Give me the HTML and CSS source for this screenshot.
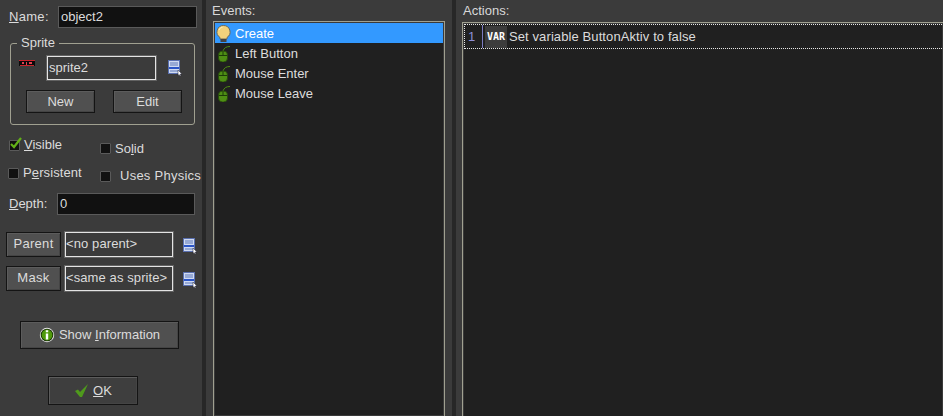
FILE: index.html
```html
<!DOCTYPE html>
<html lang="en">
<head>
<meta charset="utf-8">
<title>Object Properties</title>
<link rel="stylesheet" href="styles.css">
</head>
<body>
<svg class="defs" width="0" height="0" aria-hidden="true">
  <symbol id="menu" viewBox="0 0 14 16">
    <rect x="0.500" y="0.500" width="11" height="13" fill="#cfdaf2" stroke="#5a70b0"/>
    <path d="M2 3h8M2 5h8M2 11h8" stroke="#5f78b8"/>
    <rect x="1" y="7" width="10" height="2" fill="#2a55c8"/>
    <path d="M10 10v5.500l1-1 1 1.500 1-.5-.8-1.500H14z" fill="#fff" stroke="#223" stroke-width=".5"/>
  </symbol>
  <symbol id="mouse" viewBox="0 0 15 17">
    <path d="M7 6c1-3 3-4.500 7-4.500" fill="none" stroke="#4d8a12"/>
    <rect x="2.500" y="6" width="9" height="11" rx="4" fill="#4f8f14" stroke="#24480a" stroke-width=".8"/>
    <path d="M3 10.500h8M7 6v5" stroke="#1d3d08"/>
  </symbol>
</svg>
<div class="window">
  <aside class="props">
    <div class="row name-row">
      <label class="label name-label"><u>N</u>ame:</label>
      <div class="field dark name-field">object2</div>
    </div>
    <fieldset class="group">
      <legend>Sprite</legend>
      <div class="row sprite-row">
        <svg class="thumb" width="16" height="6" viewBox="0 0 16 6"><rect width="16" height="6" fill="#0a0a0a"/><path d="M0 .5h16M1 5.500h14" stroke="#c8242c"/><path d="M3 2h2v2H3zM7 2h1v3H7zM10 2h3v2h-3z" fill="#e04050"/></svg>
        <div class="field light sprite-field">sprite2</div>
        <svg class="menu-icon"><use href="#menu"/></svg>
      </div>
      <div class="row sprite-buttons">
        <button class="btn small">New</button>
        <button class="btn small">Edit</button>
      </div>
    </fieldset>
    <div class="checks">
      <div class="check check-visible">
        <span class="box"><svg class="tick" width="14" height="14" viewBox="0 0 14 14"><path d="M2 7l3 3 7-9" fill="none" stroke="#62b018" stroke-width="2.200"/></svg></span><span class="check-text"><u>V</u>isible</span>
      </div>
      <div class="check check-solid"><span class="box"></span><span class="check-text">So<u>l</u>id</span></div>
      <div class="check check-persistent"><span class="box"></span><span class="check-text">P<u>e</u>rsistent</span></div>
      <div class="check check-physics"><span class="box"></span><span class="check-text wide">Uses Physics</span></div>
    </div>
    <div class="row depth-row">
      <label class="label depth-label"><u>D</u>epth:</label>
      <div class="field dark depth-field">0</div>
    </div>
    <div class="row parent-row">
      <button class="btn side">Parent</button>
      <div class="field light side-field">&lt;no parent&gt;</div>
      <svg class="menu-icon low"><use href="#menu"/></svg>
    </div>
    <div class="row mask-row">
      <button class="btn side">Mask</button>
      <div class="field light side-field">&lt;same as sprite&gt;</div>
      <svg class="menu-icon low"><use href="#menu"/></svg>
    </div>
    <button class="btn info">
      <svg width="16" height="16" viewBox="0 0 16 16"><circle cx="8" cy="8" r="7.200" fill="#e8e8e8"/><circle cx="8" cy="8" r="6.300" fill="#173006"/><circle cx="8" cy="8" r="5.400" fill="#4f9a0c"/><path d="M6.800 3.200h2.400v2H6.800zM6.800 6.500h2.400v6H6.800z" fill="#fff"/></svg>
      <span>Show <u>I</u>nformation</span>
    </button>
    <button class="btn ok">
      <svg width="13" height="13" viewBox="0 0 13 13"><path d="M0 7l3-1.500 2 2.500 8-8-6 13H5z" fill="#4f9a1c"/></svg>
      <span><u>O</u>K</span>
    </button>
  </aside>
  <div class="divider"></div>
  <section class="events">
    <div class="heading">Events:</div>
    <div class="list">
      <div class="event selected">
        <svg class="event-icon" viewBox="0 0 15 17"><path d="M7.500 .5a6.500 6.500 0 0 0-3.500 12V14h7v-1.500a6.500 6.500 0 0 0-3.500-12z" fill="#f2d27c" stroke="#6e6a58"/><path d="M4.500 14h6v3h-6z" fill="#444"/><path d="M3 5c1-2 2-2.800 3.500-2.800" stroke="#fff6d0" fill="none"/></svg>
        <span>Create</span>
      </div>
      <div class="event"><svg class="event-icon"><use href="#mouse"/></svg><span>Left Button</span></div>
      <div class="event"><svg class="event-icon"><use href="#mouse"/></svg><span>Mouse Enter</span></div>
      <div class="event"><svg class="event-icon"><use href="#mouse"/></svg><span>Mouse Leave</span></div>
    </div>
  </section>
  <div class="divider"></div>
  <section class="actions">
    <div class="heading">Actions:</div>
    <div class="list action-list">
      <div class="action">
        <span class="action-num">1</span>
        <span class="var-badge">VAR</span>
        <span class="action-text">Set variable ButtonAktiv to false</span>
      </div>
    </div>
  </section>
</div>
</body>
</html>
```
FILE: styles.css
```css
* { box-sizing: border-box; }
html, body { margin: 0; height: 100%; }
body { background: #3b3b3b; overflow: hidden; color: #dcdcdc; font: 13px/16px "Liberation Sans", Arial, sans-serif; }
.defs { position: absolute; }
.window { display: flex; height: 416px; width: 943px; }
.props { width: 202px; flex: none; display: flex; flex-direction: column; }
.divider { width: 4px; flex: none; background: #272727; }
.row { display: flex; align-items: center; }
.field { display: flex; align-items: center; padding-left: 2px; white-space: nowrap; overflow: hidden; }
.field.dark { background: #111; border: 1px solid #5a5a5a; }
.field.light { background: #3b3b3b; border: 1px solid #e4e4e4; box-shadow: 0 0 0 1px #626262; }
.btn { display: flex; align-items: center; justify-content: center; padding: 0; font: inherit; color: #dcdcdc; background: #505050; border: 1px solid #141414; box-shadow: inset 1px 1px 0 #5c5c5c, inset -1px -1px 0 #444; }
.name-row { margin: 6px 0 0 9px; height: 22px; }
.name-label { width: 49px; letter-spacing: .3px; }
.name-field { width: 139px; height: 22px; }
.group { margin: 7px 0 0 10px; width: 185px; height: 90px; padding: 0; border: 1px solid #a0a090; border-radius: 3px; }
.group legend { margin-left: 6px; padding: 0 4px; line-height: 16px; }
.sprite-row { margin: 4px 0 0 8px; height: 26px; }
.thumb { flex: none; align-self: flex-start; margin-top: 5px; }
.field.sprite-field { width: 109px; height: 24px; margin-left: 12px; padding-left: 1px; }
.menu-icon { width: 14px; height: 16px; flex: none; margin-left: 12px; }
.menu-icon.low { margin-left: 10px; margin-top: 4px; }
.sprite-buttons { margin: 9px 0 0 15px; gap: 18px; }
.small { width: 69px; height: 23px; }
.checks { display: grid; grid-template-columns: 92px 100px; grid-template-rows: 29px 28px; margin: 11px 0 0 8px; height: 57px; }
.check { display: flex; align-items: flex-start; }
.box { position: relative; display: block; flex: none; width: 11px; height: 11px; background: #111; border: 1px solid #5a5a5a; border-radius: 1px; }
.tick { position: absolute; left: -1px; top: -4px; }
.check-text { margin-left: 4px; white-space: nowrap; }
.check-text.wide { margin-left: 9px; letter-spacing: .25px; }
.check-visible { margin-left: 1px; }
.check-visible .box { margin-top: 4px; }
.check-visible .check-text { margin-top: 1px; }
.check-solid { padding-top: 7px; }
.check-solid .check-text { margin-top: -2px; }
.check-persistent .box { margin-top: 3px; }
.check-persistent .check-text { letter-spacing: .1px; }
.check-physics { padding-top: 6px; }
.check-physics .check-text { margin-top: -3px; }
.depth-row { margin: 0 0 0 9px; height: 22px; }
.depth-label { width: 48px; }
.depth-field { width: 138px; height: 22px; }
.parent-row { margin: 16px 0 0 6px; height: 26px; }
.mask-row { margin: 8px 0 0 6px; height: 26px; }
.side { width: 55px; height: 25px; flex: none; letter-spacing: .3px; }
.field.side-field { width: 108px; height: 25px; margin-left: 4px; padding-left: 0; letter-spacing: .1px; }
.info { margin: 30px 0 0 20px; width: 159px; height: 28px; gap: 4px; }
.ok { margin: 27px 0 0 48px; width: 90px; height: 29px; gap: 5px; padding-left: 1px; background: #3e3e3e; }
.events { width: 246px; flex: none; padding-left: 7px; }
.actions { flex: 1; padding-left: 6px; min-width: 0; }
.heading { height: 21px; padding-top: 3px; margin-left: -1px; color: #d8d8d8; }
.actions .heading { height: 22px; margin-left: 1px; }
.list { height: 395px; background: #202020; border: 1px solid #a0a090; border-bottom: 0; box-shadow: inset 0 0 0 1px #3a3a3a; padding: 1px; }
.events .list { width: 232px; }
.event { display: flex; align-items: center; height: 20px; gap: 4px; padding-left: 1px; }
.event span { padding-top: 2px; }
.event.selected { background: #3399ff; color: #fff; }
.event-icon { width: 15px; height: 17px; flex: none; }
.action-list { border-right: 0; }
.action { display: flex; align-items: center; height: 25px; border: 1px dotted #e8e8e8; border-right: 0; }
.action-num { width: 18px; height: 100%; padding-left: 3px; display: flex; align-items: center; color: #8f8fd8; border-right: 1px solid #7a7ac0; }
.var-badge { display: flex; align-items: center; justify-content: center; width: 22px; height: 22px; margin: 0 2px; background: #3c3c3c; color: #fff; font: bold 10px/1 "DejaVu Sans Mono", monospace; }
.action-text { letter-spacing: .1px; }
```
